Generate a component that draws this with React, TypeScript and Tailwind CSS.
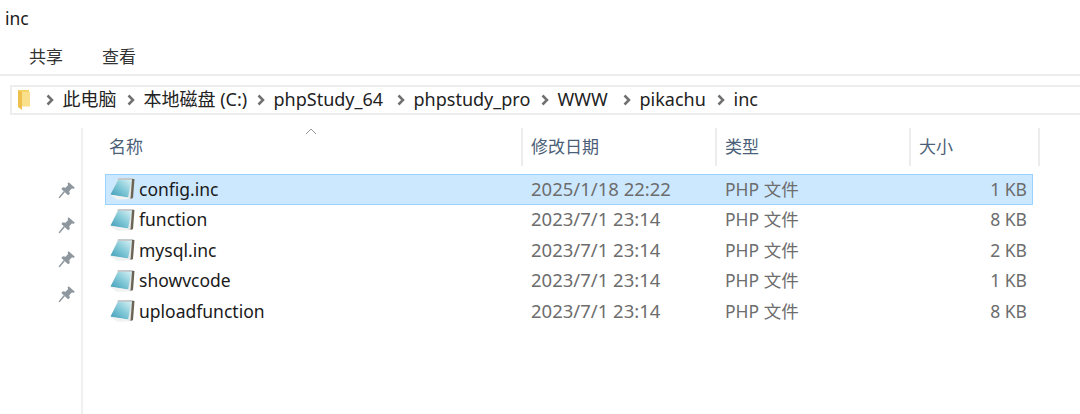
const FONT = "font-['Noto_Sans','Noto_Sans_CJK_SC',sans-serif]";

const crumbs = [
  { label: '此电脑', width: 'w-[81px]' },
  { label: '本地磁盘 (C:)', width: 'w-[130px]' },
  { label: 'phpStudy_64', width: 'w-[140px]' },
  { label: 'phpstudy_pro', width: 'w-[144px]' },
  { label: 'WWW', width: 'w-[82px]' },
  { label: 'pikachu', width: 'w-[94px]' },
  { label: 'inc', width: 'w-[50px]' },
];

const files = [
  { name: 'config.inc', date: '2025/1/18 22:22', size: '1 KB', selected: true },
  { name: 'function', date: '2023/7/1 23:14', size: '8 KB' },
  { name: 'mysql.inc', date: '2023/7/1 23:14', size: '2 KB' },
  { name: 'showvcode', date: '2023/7/1 23:14', size: '1 KB' },
  { name: 'uploadfunction', date: '2023/7/1 23:14', size: '8 KB' },
];

function FolderIcon() {
  return (
    <svg width="16" height="20" viewBox="0 0 16 20" className="shrink-0">
      <path d="M1 0h11v16H1z" fill="#f6d365" />
      <path d="M1 0l4 2v18l-4-3z" fill="#eec04e" />
      <path d="M5 2h8v14.500H5z" fill="#fbe08c" />
    </svg>
  );
}

function Chevron() {
  return (
    <svg width="8" height="12" viewBox="0 0 8 12" className="shrink-0">
      <path d="M1.500 1.500L6 6l-4.500 4.500" fill="none" stroke="#707070" strokeWidth="2.500" />
    </svg>
  );
}

function PinIcon() {
  return (
    <svg width="18" height="18" viewBox="0 0 16 16">
      <path d="M9.500 1l5.500 5-1.500 1-1-.5-2.500 2.500.5 2.500-1.500 1.200-6-5.700 1.300-1.500 2.400.4L9 3.500 8.500 2.300z" fill="#8e979e" />
      <path d="M5.500 9.500L1 15" stroke="#8e979e" strokeWidth="1.400" />
    </svg>
  );
}

function NotepadIcon({ id }: { id: string }) {
  return (
    <svg width="25" height="23" viewBox="0 0 25 23" className="shrink-0">
      <defs>
        <linearGradient id={id} x1="0" y1="1" x2="1" y2="0">
          <stop offset="0" stopColor="#3a9ab6" />
          <stop offset="0.55" stopColor="#86cbd9" />
          <stop offset="1" stopColor="#d6f0f3" />
        </linearGradient>
      </defs>
      <path d="M0.500 18L8 1h16l-1.500 21L7 22.500z" fill="#e4e8e9" />
      <path d="M0.500 17.500L8 3h13.500L18 20.500z" fill={`url(#${id})`} />
      <path d="M8 1h15.500l-1.500 2H7.500z" fill="#c4cacc" />
      <path d="M22 2h2.500L23 21l-2.500 1z" fill="#6b6555" />
      <path d="M0.500 18l17.500 2.500.5 1.500-11 .5z" fill="#f1f3f3" />
    </svg>
  );
}

export default function App() {
  return (
    <div className={`w-[1080px] h-[414px] overflow-hidden bg-white flex flex-col ${FONT}`}>
      <div className="h-[36px] pl-[5px] flex items-center text-[17.500px] text-[#1a1a1a]">inc</div>

      <div className="h-[40px] flex items-center border-b-2 border-[#ececec] pt-[3px] text-[17px] text-[#333]">
        <span className="ml-[29px]">共享</span>
        <span className="ml-[39px]">查看</span>
      </div>

      <div className="h-[9px]" />

      <div className="ml-[10px] h-[30px] border-2 border-r-0 border-[#ededed] flex items-center pl-[5px] pb-[1px] text-[18px] text-[#222]">
        <FolderIcon />
        <div className="flex items-center ml-[13px]">
          {crumbs.map((crumb) => (
            <div key={crumb.label} className={`flex items-center ${crumb.width} shrink-0`}>
              <Chevron />
              <span className="ml-[8.500px] whitespace-nowrap">{crumb.label}</span>
            </div>
          ))}
        </div>
      </div>

      <div className="flex flex-1 mt-[13px]">
        <div className="w-[83px] border-r-2 border-[#f0f0f0] flex flex-col items-center shrink-0 pl-[53px] pt-[53px] gap-[16.500px]">
          <PinIcon />
          <PinIcon />
          <PinIcon />
          <PinIcon />
        </div>

        <div className="flex-1 min-w-0 relative">
          <svg width="12" height="7" viewBox="0 0 12 7" className="absolute left-[222px] top-0">
            <path d="M1 6l5-5 5 5" fill="none" stroke="#9a9a9a" strokeWidth="1" />
          </svg>

          <div className="flex h-[38px] text-[17px] text-[#4c5f78]">
            <div className="w-[440px] pl-[26px] flex items-center border-r-2 border-[#ececec] shrink-0">名称</div>
            <div className="w-[194px] pl-[8px] flex items-center border-r-2 border-[#ececec] shrink-0">修改日期</div>
            <div className="w-[194px] pl-[8px] flex items-center border-r-2 border-[#ececec] shrink-0">类型</div>
            <div className="w-[129px] pl-[8px] flex items-center border-r-2 border-[#ececec] shrink-0">大小</div>
          </div>

          <div className="mt-[8px] ml-[22px] w-[928px]">
            {files.map((file, i) => (
              <div
                key={file.name}
                className={`flex items-center h-[30.500px] border pb-[1px] text-[17.500px] ${
                  file.selected ? 'bg-[#cce8ff] border-[#99d1ff]' : 'border-transparent'
                }`}
              >
                <div className="w-[416px] pl-[4px] flex items-center shrink-0 text-[#1a1a1a]">
                  <NotepadIcon id={`notepad-${i}`} />
                  <span className="ml-[4px]">{file.name}</span>
                </div>
                <div className="w-[194px] pl-[9px] shrink-0 text-[18.500px] text-[#6d6d6d]">{file.date}</div>
                <div className="w-[194px] pl-[9px] shrink-0 text-[#6d6d6d]">PHP 文件</div>
                <div className="flex-1 pr-[5px] text-right text-[#6d6d6d]">{file.size}</div>
              </div>
            ))}
          </div>
        </div>
      </div>
    </div>
  );
}
